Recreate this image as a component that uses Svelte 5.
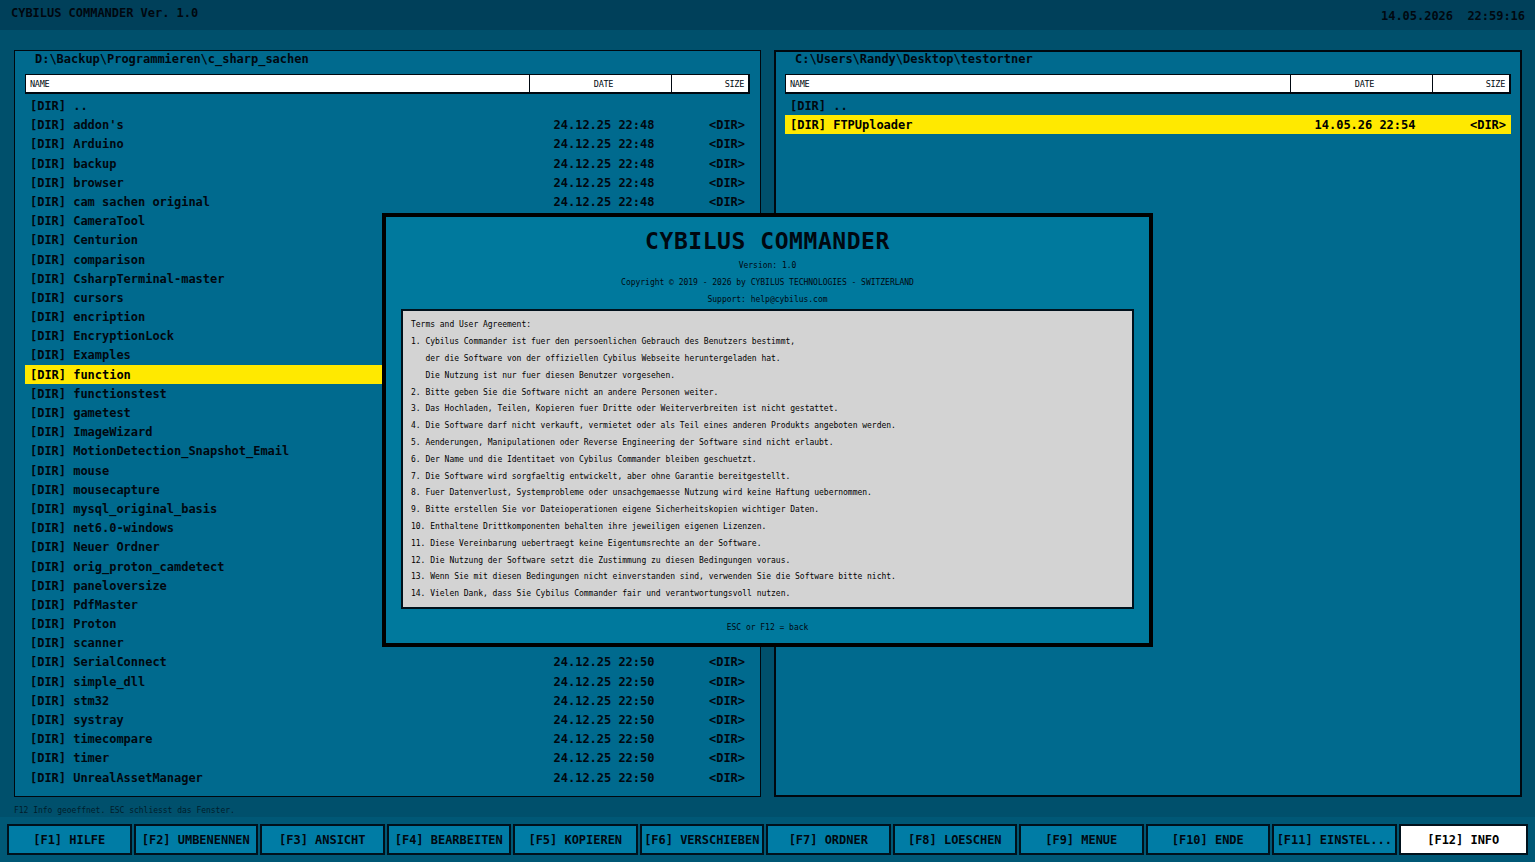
<script>
    const names = [
        '..', "addon's", 'Arduino', 'backup', 'browser', 'cam sachen original',
        'CameraTool', 'Centurion', 'comparison', 'CsharpTerminal-master', 'cursors',
        'encription', 'EncryptionLock', 'Examples', 'function', 'functionstest',
        'gametest', 'ImageWizard', 'MotionDetection_Snapshot_Email', 'mouse',
        'mousecapture', 'mysql_original_basis', 'net6.0-windows', 'Neuer Ordner',
        'orig_proton_camdetect', 'paneloversize', 'PdfMaster', 'Proton', 'scanner',
        'SerialConnect', 'simple_dll', 'stm32', 'systray', 'timecompare', 'timer',
        'UnrealAssetManager',
    ]

    // rows behind the dialog keep only their name
    function dateFor(i) {
        if (i > 0 && i < 6) return '24.12.25 22:48'
        return i > 28 ? '24.12.25 22:50' : ''
    }

    const panels = [
        {
            path: 'D:\\Backup\\Programmieren\\c_sharp_sachen',
            selected: 'function',
            rows: names.map((name, i) => ({ name, date: dateFor(i) })),
        },
        {
            path: 'C:\\Users\\Randy\\Desktop\\testortner',
            selected: 'FTPUploader',
            rows: [
                { name: '..', date: '' },
                { name: 'FTPUploader', date: '14.05.26 22:54' },
            ],
        },
    ]

    const terms = [
        'Terms and User Agreement:',
        '1. Cybilus Commander ist fuer den persoenlichen Gebrauch des Benutzers bestimmt,',
        '   der die Software von der offiziellen Cybilus Webseite heruntergeladen hat.',
        '   Die Nutzung ist nur fuer diesen Benutzer vorgesehen.',
        '2. Bitte geben Sie die Software nicht an andere Personen weiter.',
        '3. Das Hochladen, Teilen, Kopieren fuer Dritte oder Weiterverbreiten ist nicht gestattet.',
        '4. Die Software darf nicht verkauft, vermietet oder als Teil eines anderen Produkts angeboten werden.',
        '5. Aenderungen, Manipulationen oder Reverse Engineering der Software sind nicht erlaubt.',
        '6. Der Name und die Identitaet von Cybilus Commander bleiben geschuetzt.',
        '7. Die Software wird sorgfaeltig entwickelt, aber ohne Garantie bereitgestellt.',
        '8. Fuer Datenverlust, Systemprobleme oder unsachgemaesse Nutzung wird keine Haftung uebernommen.',
        '9. Bitte erstellen Sie vor Dateioperationen eigene Sicherheitskopien wichtiger Daten.',
        '10. Enthaltene Drittkomponenten behalten ihre jeweiligen eigenen Lizenzen.',
        '11. Diese Vereinbarung uebertraegt keine Eigentumsrechte an der Software.',
        '12. Die Nutzung der Software setzt die Zustimmung zu diesen Bedingungen voraus.',
        '13. Wenn Sie mit diesen Bedingungen nicht einverstanden sind, verwenden Sie die Software bitte nicht.',
        '14. Vielen Dank, dass Sie Cybilus Commander fair und verantwortungsvoll nutzen.',
    ]

    const keys = [
        'HILFE', 'UMBENENNEN', 'ANSICHT', 'BEARBEITEN', 'KOPIEREN', 'VERSCHIEBEN',
        'ORDNER', 'LOESCHEN', 'MENUE', 'ENDE', 'EINSTEL...', 'INFO',
    ]

    let activeKey = $state('INFO')
    let activePanel = $state(1)
</script>

<div class="app">
    <header>
        <span>CYBILUS COMMANDER Ver. 1.0</span>
        <span class="clock">14.05.2026  22:59:16</span>
    </header>

    <main>
        {#each panels as panel, p}
            <section class="panel" class:active={p === activePanel}>
                <div class="path">{panel.path}</div>
                <div class="columns">
                    <span>NAME</span>
                    <span class="date">DATE</span>
                    <span class="size">SIZE</span>
                </div>
                <div class="list">
                    {#each panel.rows as row}
                        <div class="row" class:selected={row.name === panel.selected}>
                            <span>[DIR] {row.name}</span>
                            <span class="date">{row.date}</span>
                            <span class="size">{row.date ? '<DIR>' : ''}</span>
                        </div>
                    {/each}
                </div>
            </section>
        {/each}
    </main>

    <div class="status">F12 Info geoeffnet. ESC schliesst das Fenster.</div>

    <footer>
        {#each keys as key, i}
            <button class:active={key === activeKey} onclick={() => activeKey = key}>[F{i + 1}] {key}</button>
        {/each}
    </footer>

    {#if activeKey === 'INFO'}
        <div class="dialog">
            <h1>CYBILUS COMMANDER</h1>
            <p>Version: 1.0</p>
            <p>Copyright © 2019 - 2026 by CYBILUS TECHNOLOGIES - SWITZERLAND</p>
            <p>Support: help@cybilus.com</p>
            <div class="terms">
                {#each terms as line}
                    <div class="line">{line}</div>
                {/each}
            </div>
            <p class="hint">ESC or F12 = back</p>
        </div>
    {/if}
</div>

<style>
    :global(body) {
        margin: 0;
        overflow: hidden;
    }
    .app {
        position: relative;
        box-sizing: border-box;
        width: 1535px;
        height: 862px;
        display: flex;
        flex-direction: column;
        background: #00506c;
        color: #000810;
        font: bold 12px/19.2px "DejaVu Sans Mono", monospace;
        letter-spacing: -0.024px;
    }
    .app * {
        box-sizing: border-box;
    }
    span,
    .line {
        white-space: pre;
    }
    header {
        height: 30px;
        padding: 4px 10px 0 11px;
        display: flex;
        justify-content: space-between;
        background: #00405a;
    }
    .clock {
        padding-top: 3px;
    }
    main {
        height: 767px;
        padding: 20px 13px 0 14px;
        display: grid;
        grid-template-columns: 747px 748px;
        grid-template-rows: 747px;
        gap: 13px;
    }
    .panel {
        border: 1.5px solid #00080f;
        padding: 0 10px;
        background: #006a8e;
    }
    .panel.active {
        border-width: 2px;
        padding: 0 9px;
    }
    .path {
        height: 23px;
        padding-left: 10px;
        line-height: 17px;
    }
    .panel.active .path {
        height: 22px;
        line-height: 15px;
    }
    .columns,
    .row {
        display: grid;
        grid-template-columns: 1fr 142px 78px;
    }
    .columns {
        height: 20px;
        border: 2px solid #000810;
        border-width: 1px 2px 2px 1px;
        background: #fff;
        font-weight: normal;
        font-size: 8.5px;
        line-height: 19px;
        letter-spacing: -0.3px;
        grid-template-columns: 1fr 142px 77px;
    }
    .columns span {
        padding: 0 4px;
    }
    .columns .date,
    .columns .size {
        border-left: 1px solid #000810;
    }
    .columns .date {
        padding-left: 10px;
    }
    .date {
        text-align: center;
    }
    .size {
        text-align: right;
    }
    .list {
        padding-top: 2px;
    }
    .row {
        height: 19.2px;
        line-height: 20.6px;
    }
    .row span {
        padding: 0 5px;
        height: 19.2px;
    }
    .row .date {
        padding-left: 11px;
    }
    .row.selected {
        background: #ffe900;
        color: #000;
    }
    .status {
        height: 20px;
        padding-left: 14px;
        font-weight: normal;
        font-size: 8px;
        line-height: 27px;
        letter-spacing: -0.016px;
        color: #001d2b;
    }
    footer {
        height: 45px;
        padding: 7px 7px 7px;
        display: grid;
        grid-template-columns: repeat(11, 124.5px) 1fr;
        gap: 2px;
        background: #005876;
    }
    button {
        height: 31px;
        margin: 0;
        padding: 2px 0 0;
        border: 2px solid #00111c;
        background: #007ca5;
        color: inherit;
        font: inherit;
        letter-spacing: inherit;
        white-space: nowrap;
    }
    button.active {
        background: #fff;
        color: #000;
    }
    .dialog {
        position: absolute;
        left: 382px;
        top: 213px;
        width: 771px;
        height: 434px;
        padding: 11px 15px 0;
        border: 4px solid #000;
        background: #00799d;
        text-align: center;
        font-weight: normal;
        font-size: 8px;
        line-height: 16.8px;
        letter-spacing: -0.016px;
    }
    h1 {
        margin: 0;
        height: 30px;
        font-size: 23px;
        line-height: 26px;
        letter-spacing: 0.55px;
    }
    p {
        margin: 0;
    }
    .terms {
        height: 300px;
        margin-top: 1px;
        padding: 6px 8px;
        border: 2px solid #00111c;
        background: #d3d3d3;
        color: #000;
        text-align: left;
    }
    .hint {
        margin-top: 11px;
    }
</style>
